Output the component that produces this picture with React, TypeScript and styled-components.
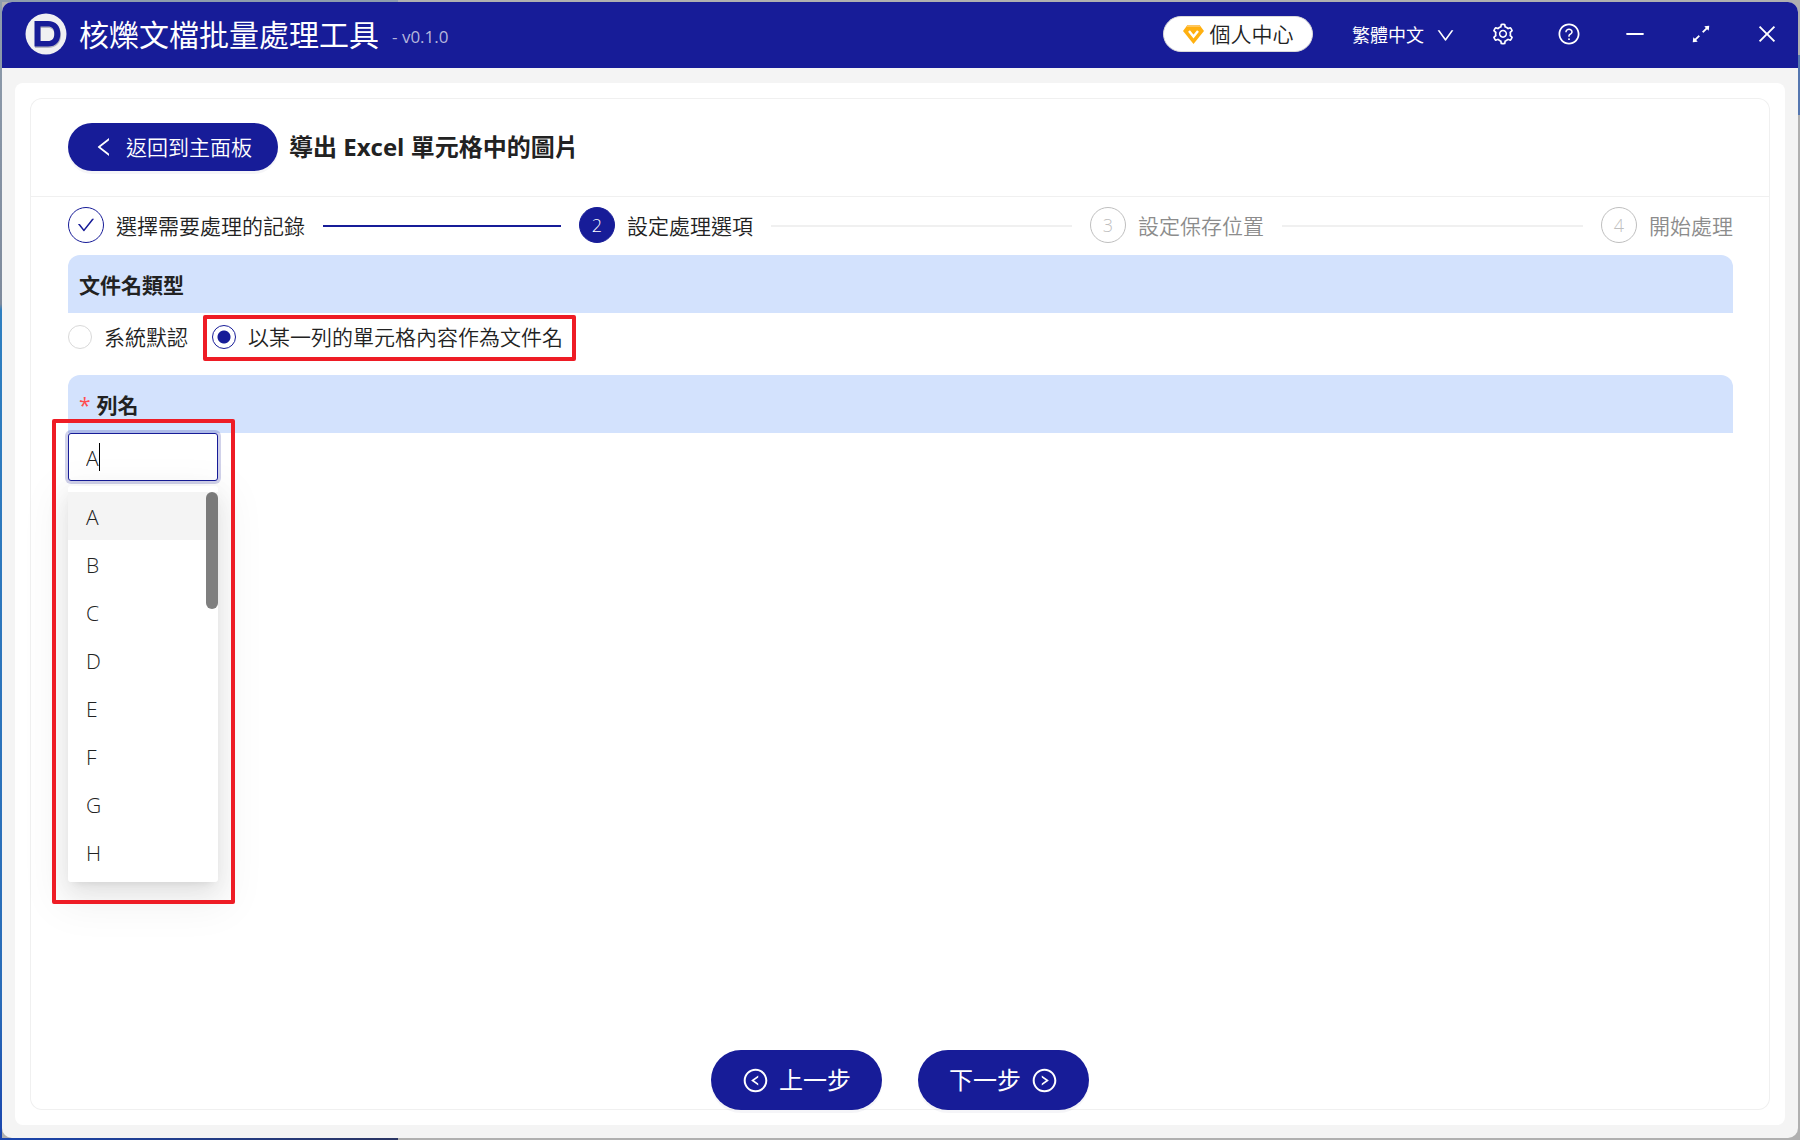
import React, { useState } from 'react';
import styled, { createGlobalStyle } from 'styled-components';
import {
  AiOutlineArrowsAlt,
  AiOutlineCheck,
  AiOutlineClose,
  AiOutlineDown,
  AiOutlineLeft,
  AiOutlineLeftCircle,
  AiOutlineMinus,
  AiOutlineQuestionCircle,
  AiOutlineRightCircle,
  AiOutlineSetting,
} from 'react-icons/ai';

const primary = '#171c98';
const ink = '#222';

const GlobalStyle = createGlobalStyle`
  *, *::before, *::after { box-sizing: border-box; }
  body {
    margin: 0;
    color: ${ink};
    font-family: 'Open Sans', 'Noto Sans CJK TC', 'Noto Sans', sans-serif;
    font-size: 21px;
    font-weight: 350;
    line-height: 32px;
    background: #b0b0b0;
  }
  button, input, select { font: inherit; color: inherit; }
`;

const Desktop = styled.div`
  display: flex;
  min-height: 100vh;
  padding: 2px;
  background:
    linear-gradient(#8f9dad, #7e8a9c 304px, #2f7fc0 310px, #2a6cb8 1000px, #1a45ad) left / 2px 100% no-repeat,
    linear-gradient(#8f9dad, #8f9dad) left top / 398px 2px no-repeat,
    linear-gradient(90deg, #1a45ad, #2b3563) left bottom / 398px 2px no-repeat,
    linear-gradient(#5577b0, #5577b0) right 55px / 2px 60px no-repeat,
    #b0b0b0;
`;

const Window = styled.div`
  flex: 1;
  min-width: 0;
  display: flex;
  flex-direction: column;
  border-radius: 10px;
  overflow: hidden;
  background: #f4f4f4;
`;

const TitleBar = styled.header`
  display: flex;
  align-items: center;
  height: 66px;
  padding: 0 1px 2px 23px;
  color: #fff;
  background: ${primary};
`;

const AppName = styled.h1`
  margin: 0 13px 0 12px;
  padding-top: 2px;
  font-size: 30px;
  line-height: 40px;
  font-weight: 400;
`;

const Version = styled.span`
  flex: 1;
  padding-top: 5px;
  font-size: 17px;
  line-height: 24px;
  font-weight: 400;
  color: #b4b6dc;
`;

const AccountButton = styled.button`
  display: flex;
  align-items: center;
  justify-content: center;
  gap: 6px;
  width: 150px;
  height: 36px;
  margin-right: 39px;
  padding: 0;
  border: 1px solid #d9d9d9;
  border-radius: 18px;
  color: ${ink};
  background: #fff;
`;

const LanguageButton = styled.button`
  display: flex;
  align-items: center;
  gap: 11px;
  margin-right: 17px;
  padding: 2px 0 0;
  border: 0;
  font-size: 18px;
  line-height: 27px;
  font-weight: 400;
  background: none;
`;

const IconButton = styled.button`
  display: flex;
  align-items: center;
  justify-content: center;
  width: 60px;
  height: 40px;
  padding: 0;
  border: 0;
  background: none;
`;

const WindowControls = styled.div`
  display: flex;
  gap: 6px;
`;

const Main = styled.main`
  flex: 1;
  display: flex;
  margin: 15px 13px 13px;
  padding: 15px;
  border-radius: 8px;
  background: #fff;
`;

const Card = styled.section`
  flex: 1;
  min-width: 0;
  display: flex;
  flex-direction: column;
  border-radius: 12px;
  box-shadow: inset 0 0 0 1px #f0f0f0;
`;

const CardHeader = styled.div`
  display: flex;
  align-items: center;
  gap: 11px;
  margin: 0 1px;
  padding: 25px 37px;
  border-bottom: 1px solid #f0f0f0;
`;

const PillButton = styled.button<{ $large?: boolean }>`
  display: flex;
  align-items: center;
  gap: 10px;
  height: ${(p) => (p.$large ? 60 : 48)}px;
  padding: ${(p) => (p.$large ? '0 31px' : '0 26px 0 24px')};
  border: 0;
  border-radius: 30px;
  font-size: ${(p) => (p.$large ? 24 : 21)}px;
  font-weight: ${(p) => (p.$large ? 400 : 350)};
  color: #fff;
  background: ${primary};
  box-shadow: 0 3px 0 rgba(5, 5, 80, 0.04);
`;

const PageTitle = styled.h2`
  margin: 0;
  font-size: 24px;
  line-height: 36px;
  font-weight: 700;
`;

const Body = styled.div`
  flex: 1;
  padding: 10px 37px 0 38px;
`;

const Steps = styled.ol`
  display: flex;
  gap: 18px;
  margin: 0 0 12px;
  padding: 0;
  list-style: none;
`;

type StepState = 'done' | 'current' | 'wait';

const Step = styled.li<{ $state: StepState }>`
  flex: 1;
  display: flex;
  align-items: center;
  height: 36px;
  white-space: nowrap;
  color: ${(p) => (p.$state === 'wait' ? '#8c8c8c' : ink)};

  &:last-child { flex: none; }

  &:not(:last-child)::after {
    content: '';
    flex: 1;
    height: 2px;
    margin: 2px 0 0 18px;
    background: ${(p) => (p.$state === 'done' ? primary : '#f0f0f0')};
  }
`;

const StepLabel = styled.span`
  padding-top: 2px;
`;

const StepMark = styled.span<{ $state: StepState }>`
  display: flex;
  align-items: center;
  justify-content: center;
  width: 36px;
  height: 36px;
  margin-right: 12px;
  border: 1px solid ${(p) => (p.$state === 'wait' ? '#bfbfbf' : primary)};
  border-radius: 50%;
  font-size: 18px;
  color: ${(p) => ({ done: primary, current: '#fff', wait: '#bfbfbf' })[p.$state]};
  background: ${(p) => (p.$state === 'current' ? primary : '#fff')};
`;

const SectionTitle = styled.h3`
  display: flex;
  align-items: center;
  gap: 6px;
  height: 58px;
  margin: 0;
  padding: 1px 11px 0;
  border-radius: 12px 12px 0 0;
  font-size: 21px;
  line-height: 32px;
  font-weight: 700;
  background: #d3e2fd;
`;

const Required = styled.span`
  font-weight: 400;
  color: #ff4d4f;
`;

const RadioGroup = styled.div`
  display: flex;
  gap: 24px;
  padding: 8px 0 22px;
`;

const RadioLabel = styled.label`
  position: relative;
  display: flex;
  align-items: center;
  gap: 12px;
`;

const Radio = styled.input`
  appearance: none;
  width: 24px;
  height: 24px;
  margin: 0;
  border: 1px solid #d9d9d9;
  border-radius: 50%;
  background: #fff;

  &:checked {
    border-color: ${primary};
    background: radial-gradient(circle, ${primary} 6px, #fff 7px);
  }
`;

const Highlight = styled.span<{ $inset: string }>`
  position: absolute;
  inset: ${(p) => p.$inset};
  z-index: 2;
  border: 4px solid #ee1c25;
  border-radius: 2px;
  pointer-events: none;
`;

const Combo = styled.div`
  position: relative;
  width: 150px;
`;

const ComboInput = styled.input`
  display: block;
  width: 100%;
  height: 48px;
  padding: 2px 17px 0;
  border: 1px solid ${primary};
  border-radius: 3px;
  outline: 0;
  caret-color: transparent;
  background: #fff;
  box-shadow: 0 0 0 3px rgba(23, 28, 152, 0.2);
`;

const Caret = styled.span`
  position: absolute;
  top: 10px;
  left: 31px;
  width: 1px;
  height: 28px;
  background: #000;
`;

const Menu = styled.div`
  position: absolute;
  z-index: 1;
  top: 53px;
  left: 0;
  width: 100%;
  padding: 6px 0;
  border-radius: 3px;
  background: #fff;
  box-shadow:
    0 5px 9px -6px rgba(0, 0, 0, 0.12),
    0 9px 24px rgba(0, 0, 0, 0.08),
    0 14px 42px 12px rgba(0, 0, 0, 0.05);
`;

const Options = styled.ul`
  margin: 0;
  padding: 0;
  list-style: none;
`;

const Option = styled.li<{ $active: boolean }>`
  height: 48px;
  padding: 9px 18px 7px;
  background: ${(p) => (p.$active ? '#f4f4f4' : 'transparent')};
`;

const ScrollThumb = styled.span`
  position: absolute;
  top: 6px;
  right: 0;
  width: 12px;
  height: 117px;
  border-radius: 6px;
  background: rgba(0, 0, 0, 0.5);
`;

const Footer = styled.footer`
  display: flex;
  justify-content: center;
  gap: 36px;
`;

const Logo = () => (
  <svg width="42" height="42" viewBox="0 0 42 42" aria-hidden="true">
    <circle cx="21" cy="21" r="20.5" fill="#f0f0f2" />
    <path
      d="M10 9.500H23C31 9.500 36 14 36 22C36 30 31 35 23 35H10ZM15.500 15V29.500H23C27 29.500 29.500 27 29.500 22.200C29.500 17.500 27 15 23 15Z"
      fill="#b4b5c0"
      fillRule="evenodd"
    />
    <path
      d="M9.500 8H23C31 8 35.300 13 35.300 20.700C35.300 28.500 31 33.500 23 33.500H9.500ZM15.500 13.500V28H23C27 28 29.300 25.500 29.300 20.700C29.300 16 27 13.500 23 13.500Z"
      fill={primary}
      fillRule="evenodd"
    />
  </svg>
);

const Diamond = () => (
  <svg width="21" height="19" viewBox="0 0 21 19" aria-hidden="true">
    <path d="M4.500 0H16.500L21 6L10.500 19L0 6Z" fill="#ffb010" />
    <path d="M4.500 0H16.500L18 2H3Z" fill="#ffc65c" />
    <path d="M6 6L10.500 11.500L15 6" fill="none" stroke="#fff" strokeWidth="2.400" />
  </svg>
);

const steps: { label: string; state: StepState }[] = [
  { label: '選擇需要處理的記錄', state: 'done' },
  { label: '設定處理選項', state: 'current' },
  { label: '設定保存位置', state: 'wait' },
  { label: '開始處理', state: 'wait' },
];

const columns = ['A', 'B', 'C', 'D', 'E', 'F', 'G', 'H'];

export default function App() {
  const [mode, setMode] = useState('column');
  const [column, setColumn] = useState('A');

  return (
    <>
      <GlobalStyle />
      <Desktop>
        <Window>
          <TitleBar>
            <Logo />
            <AppName>核爍文檔批量處理工具</AppName>
            <Version>- v0.1.0</Version>
            <AccountButton type="button">
              <Diamond />
              個人中心
            </AccountButton>
            <LanguageButton type="button">
              繁體中文
              <AiOutlineDown size={21} />
            </LanguageButton>
            <WindowControls>
              <IconButton type="button" aria-label="設定">
                <AiOutlineSetting size={24} />
              </IconButton>
              <IconButton type="button" aria-label="幫助">
                <AiOutlineQuestionCircle size={24} />
              </IconButton>
              <IconButton type="button" aria-label="最小化">
                <AiOutlineMinus size={24} />
              </IconButton>
              <IconButton type="button" aria-label="最大化">
                <AiOutlineArrowsAlt size={24} />
              </IconButton>
              <IconButton type="button" aria-label="關閉">
                <AiOutlineClose size={24} />
              </IconButton>
            </WindowControls>
          </TitleBar>

          <Main>
            <Card>
              <CardHeader>
                <PillButton type="button">
                  <AiOutlineLeft size={24} />
                  返回到主面板
                </PillButton>
                <PageTitle>導出 Excel 單元格中的圖片</PageTitle>
              </CardHeader>

              <Body>
                <Steps>
                  {steps.map((step, index) => (
                    <Step key={step.label} $state={step.state}>
                      <StepMark $state={step.state}>
                        {step.state === 'done' ? <AiOutlineCheck size={20} /> : index + 1}
                      </StepMark>
                      <StepLabel>{step.label}</StepLabel>
                    </Step>
                  ))}
                </Steps>

                <SectionTitle>文件名類型</SectionTitle>
                <RadioGroup role="radiogroup" aria-label="文件名類型">
                  <RadioLabel>
                    <Radio
                      type="radio"
                      name="mode"
                      checked={mode === 'default'}
                      onChange={() => setMode('default')}
                    />
                    系統默認
                  </RadioLabel>
                  <RadioLabel>
                    <Radio
                      type="radio"
                      name="mode"
                      checked={mode === 'column'}
                      onChange={() => setMode('column')}
                    />
                    以某一列的單元格內容作為文件名
                    <Highlight $inset="-6px -13px -8px -9px" />
                  </RadioLabel>
                </RadioGroup>

                <SectionTitle>
                  <Required>*</Required>
                  <label htmlFor="column">列名</label>
                </SectionTitle>
                <Combo>
                  <ComboInput
                    id="column"
                    type="text"
                    role="combobox"
                    aria-expanded="true"
                    aria-controls="column-options"
                    value={column}
                    onChange={(e) => setColumn(e.target.value)}
                  />
                  <Caret />
                  <Menu>
                    <Options id="column-options" role="listbox">
                      {columns.map((name) => (
                        <Option
                          key={name}
                          role="option"
                          aria-selected={name === column}
                          $active={name === column}
                          onClick={() => setColumn(name)}
                        >
                          {name}
                        </Option>
                      ))}
                    </Options>
                    <ScrollThumb />
                  </Menu>
                  <Highlight $inset="-14px -17px -423px -16px" />
                </Combo>
              </Body>

              <Footer>
                <PillButton type="button" $large>
                  <AiOutlineLeftCircle size={27} />
                  上一步
                </PillButton>
                <PillButton type="button" $large>
                  下一步
                  <AiOutlineRightCircle size={27} />
                </PillButton>
              </Footer>
            </Card>
          </Main>
        </Window>
      </Desktop>
    </>
  );
}
